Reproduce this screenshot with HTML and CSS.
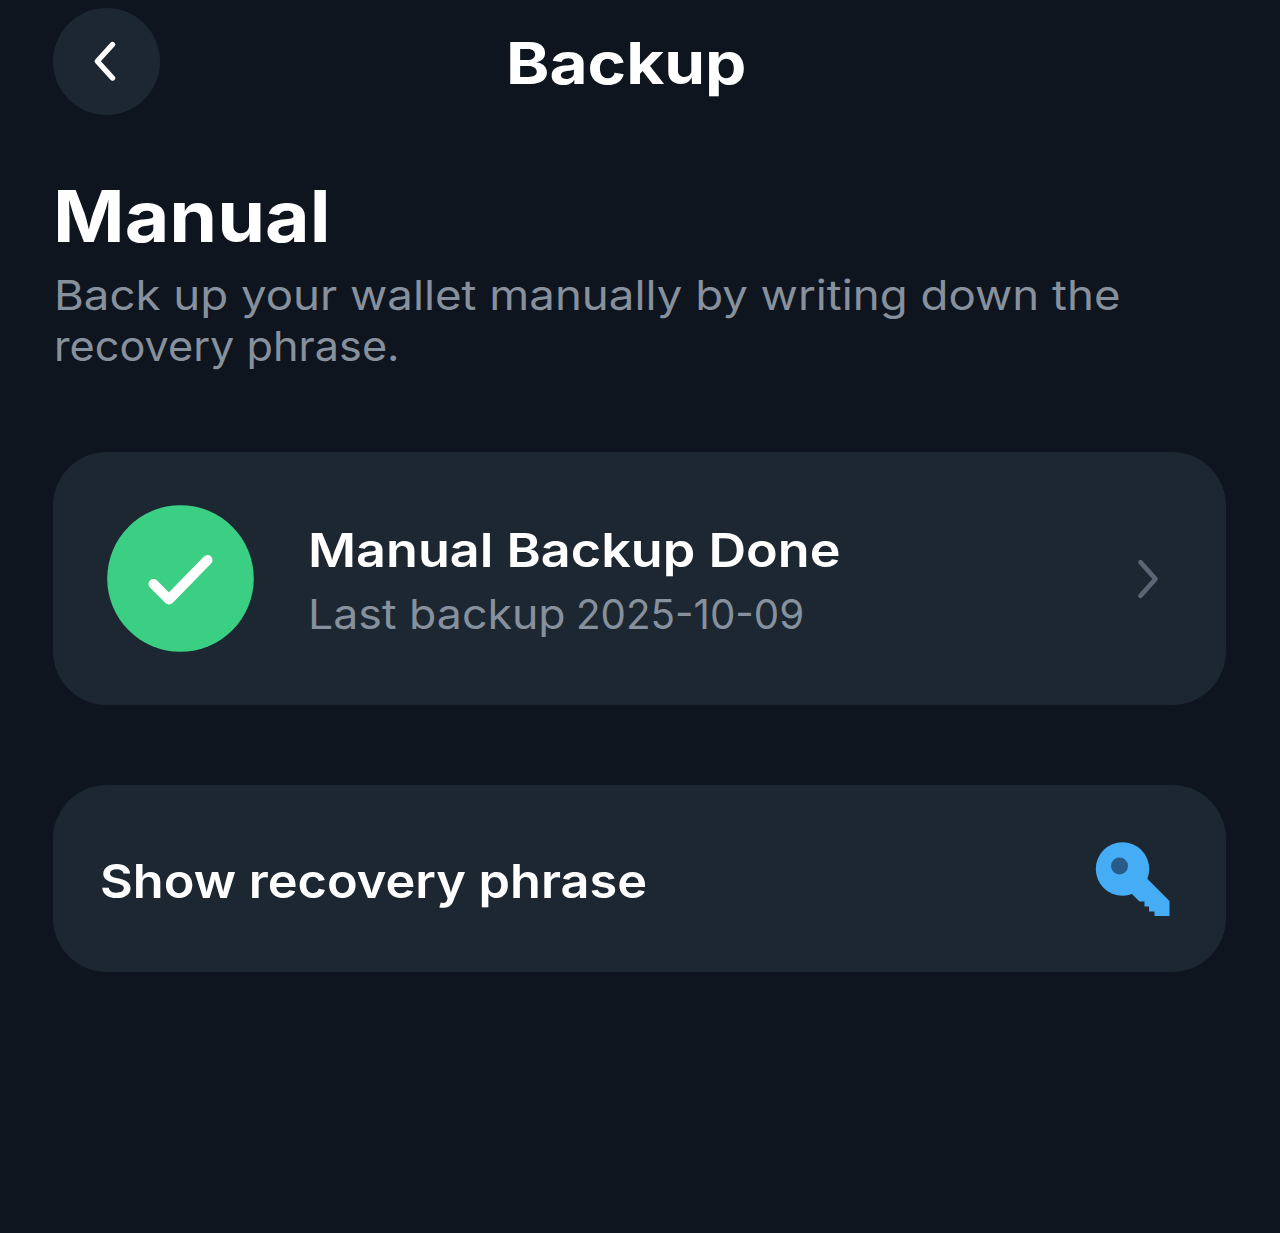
FILE: index.html
```html
<!DOCTYPE html>
<html lang="en">
<head>
<meta charset="utf-8">
<title>Backup</title>
<link rel="stylesheet" href="styles.css">
</head>
<body>
<header class="topbar">
  <button class="back" aria-label="Back">
    <svg width="107" height="107" viewBox="0 0 107 107"><path d="M59.500 36.500 44.300 53.300 59.500 70" fill="none" stroke="#fff" stroke-width="5.400" stroke-linecap="round" stroke-linejoin="round"/></svg>
  </button>
  <h1 class="page-title"><span>Backup</span></h1>
</header>
<main class="content">
  <h2 class="section-title"><span>Manual</span></h2>
  <p class="description"><span class="line-one">Back up your wallet manually by writing down the</span><br><span class="line-two">recovery phrase.</span></p>
  <a class="card status-card">
    <svg class="status-icon" width="147" height="147" viewBox="0 0 147 147"><circle cx="73.500" cy="73.500" r="73.300" fill="#3bcf84"/><path d="M46.500 79 62 94.500 100.500 55" fill="none" stroke="#fff" stroke-width="10" stroke-linecap="round" stroke-linejoin="round"/></svg>
    <div class="status-text">
      <div class="card-title status-title"><span>Manual Backup Done</span></div>
      <div class="status-date"><span class="date-label">Last backup</span> <span class="date-value">2025-10-09</span></div>
    </div>
    <svg class="chevron" width="24" height="44" viewBox="0 0 24 44"><path d="M4.500 5.200 19.500 22 4.500 38.800" fill="none" stroke="#5a6673" stroke-width="4.700" stroke-linecap="round" stroke-linejoin="round"/></svg>
  </a>
  <a class="card phrase-card">
    <div class="card-title phrase-title"><span>Show recovery phrase</span></div>
    <svg class="key" width="75" height="76" viewBox="0 0 75 76"><g fill="#45adf5"><circle cx="27.500" cy="28" r="26.700"/><path d="M52 37.500 74.500 60V75H59.500V70.500H54V65.500H49.500V60.500H44.500L36 52Z"/></g><circle cx="24.500" cy="25" r="8.500" fill="#285b87"/></svg>
  </a>
</main>
</body>
</html>
```
FILE: styles.css
```css
* { box-sizing: border-box; }

body {
  margin: 0;
  min-height: 1233px;
  background: #0f151e;
  color: #fff;
  font-family: Inter, "Open Sans", sans-serif;
  white-space: nowrap;
}

h1, h2, p { margin: 0; }

h1 span, h2 span, p span, .card-title span, .status-date span {
  display: inline-block;
  transform-origin: left center;
}

.topbar {
  display: grid;
  grid-template-columns: 107px 1fr 107px;
  align-items: center;
  padding: 8px 80px 0 53px;
}

.back {
  width: 107px;
  height: 107px;
  padding: 0;
  border: 0;
  border-radius: 50%;
  background: #1d2732;
}

.back svg { display: block; }

.page-title {
  padding-top: 3px;
  text-align: center;
  font-size: 58px;
  line-height: 70px;
  font-weight: 700;
}

.page-title span {
  transform: scaleX(1.132);
  transform-origin: center;
}

.content { padding: 61px 54px 0 53px; }

.section-title {
  font-size: 71px;
  line-height: 80px;
  font-weight: 700;
}

.section-title span { transform: scaleX(1.083); }

.description {
  padding: 14px 0 0 .5px;
  color: #87919d;
  font-size: 41px;
  line-height: 51px;
}

.line-one { transform: scaleX(1.112); }
.line-two { transform: scaleX(1.054); }

.card {
  display: flex;
  align-items: center;
  border-radius: 54px;
  background: #1d2732;
}

.status-card {
  height: 253px;
  margin-top: 80px;
  padding: 0 66px 0 53.5px;
}

.status-text { flex: 1; padding: 6px 0 0 54px; }

.card-title {
  font-size: 47px;
  line-height: 64px;
  font-weight: 600;
}

.status-title span { transform: scaleX(1.109); }

.status-date {
  color: #87919d;
  font-size: 41px;
  line-height: 64px;
}

.status-date .date-label { transform: scaleX(1.089); }

.status-date .date-value {
  margin-left: 20px;
  transform: scaleX(.982);
}

.phrase-card {
  height: 187px;
  margin-top: 80px;
  padding: 0 56px 0 46.5px;
  justify-content: space-between;
}

.phrase-title { padding-top: 4px; }
.phrase-title span { transform: scaleX(1.074); }
```
